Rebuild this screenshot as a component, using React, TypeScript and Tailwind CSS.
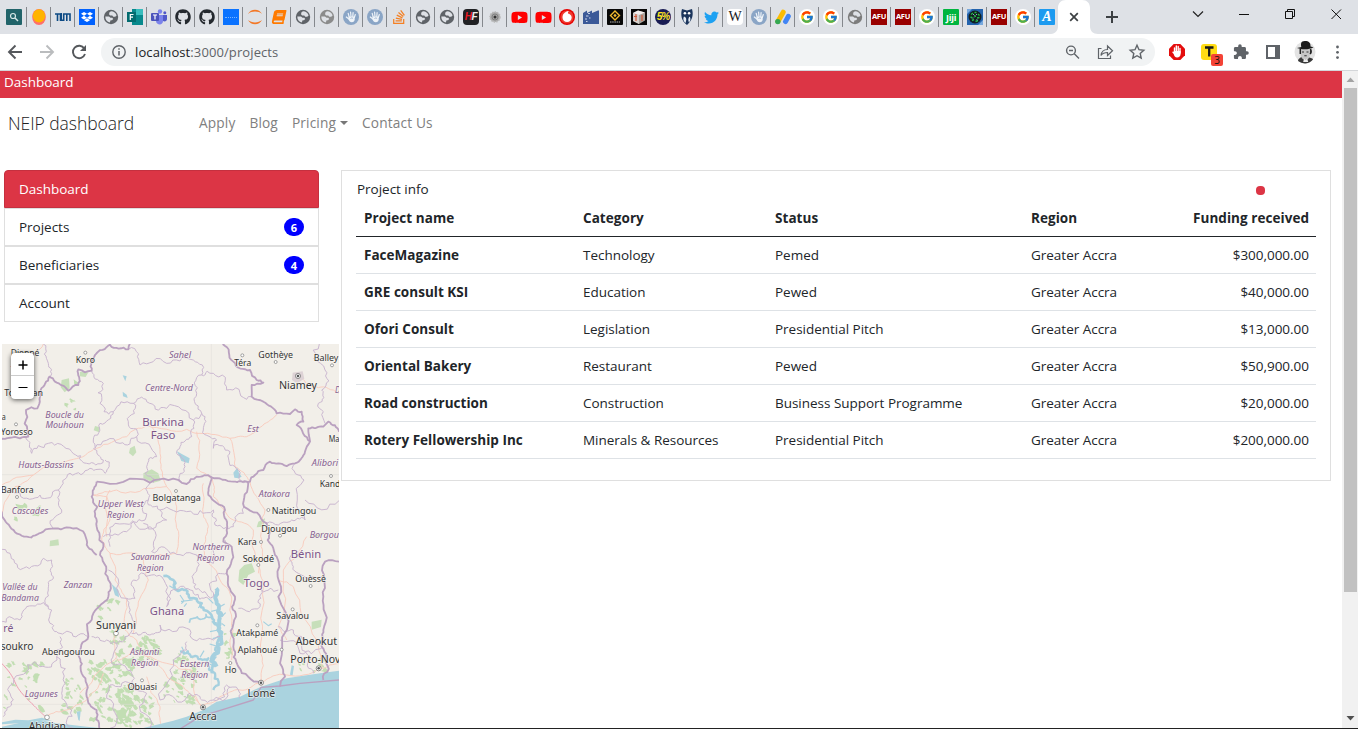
import React from "react";
import { FaBook, FaDropbox, FaGithub, FaStackOverflow, FaTwitter, FaYoutube } from "react-icons/fa";
import { FcGoogle } from "react-icons/fc";
import { MdExtension } from "react-icons/md";

/* ---------- tab icons ---------- */

function Globe({ color = "#5f6368" }: { color?: string }) {
  return (
    <svg width="16" height="16" viewBox="0 0 16 16">
      <circle cx="8" cy="8" r="7.2" fill={color} />
      <path d="M2.300 7.500H6l1.500 1.300h1.800l.9 1.200-1.200 1.300H7.600l-.8 2.300C4 13 2.200 10.500 2.300 7.500ZM6.500 3.300 8 2.200c2.800 0 5 1.800 5.600 4.300l-1.400 1.200h-2l-.9-1.200H7.200L6 5.300Z" fill="#dee1e6" />
    </svg>
  );
}

function Hand() {
  return (
    <svg width="16" height="16" viewBox="0 0 16 16">
      <circle cx="8" cy="8" r="8" fill="#8aa5c6" />
      <path d="M6.200 8 5.200 4.300M8 7.500 7.600 3.200M9.800 7.500l.3-4M11.300 8.500l1-3M5.600 9.800 3.300 8" stroke="#eef3f8" strokeWidth="1.200" strokeLinecap="round" />
      <path d="M5.500 7.500h6.200v2.800c0 2-1.300 3-2.900 3-1.700 0-2.700-1.200-3.300-3Z" fill="#eef3f8" />
      <path d="M7.500 9.500c.8-.7 2-.6 2.500.2" fill="none" stroke="#8aa5c6" strokeWidth=".8" />
    </svg>
  );
}

function Google() {
  return (
    <span className="flex size-4 items-center justify-center rounded-full bg-white">
      <FcGoogle size={14} />
    </span>
  );
}

function Afu() {
  return (
    <span className="flex size-4 items-center justify-center bg-[#990000] font-['Noto_Sans',sans-serif] text-[7.5px] leading-none font-bold tracking-[-0.3px] text-white">
      AFU
    </span>
  );
}

function Youtube() {
  return (
    <span className="flex size-4 items-center justify-center">
      <FaYoutube size={17} color="#ff0000" className="shrink-0" />
    </span>
  );
}

const tabIcons: React.ReactNode[] = [
  <svg width="16" height="16" viewBox="0 0 16 16" className="-ml-0.5">
    <rect width="16" height="16" rx="1" fill="#21646a" />
    <circle cx="7" cy="7" r="2.500" fill="none" stroke="#d7e8e8" strokeWidth="1.200" />
    <path d="m9 9 3 3" stroke="#d7e8e8" strokeWidth="1.400" />
  </svg>,
  <svg width="16" height="16" viewBox="0 0 16 16">
    <ellipse cx="8" cy="8" rx="6.800" ry="8" fill="#ff6f6a" />
    <ellipse cx="8" cy="6.800" rx="6.200" ry="6.600" fill="#ffb400" />
  </svg>,
  <svg width="16" height="16" viewBox="0 0 16 16">
    <path d="M0 5h5.500v7M2.500 5v7M6.200 4v7.200h2.500V5H15v7M11.800 5v7" fill="none" stroke="#0d4a84" strokeWidth="1.600" />
  </svg>,
  <span className="flex size-4 items-center justify-center bg-[#0061fe]"><FaDropbox size={12} color="white" /></span>,
  <Globe />,
  <svg width="16" height="16" viewBox="0 0 16 16">
    <path d="M5 0h11v16H5z" fill="#07898d" />
    <path d="M9 0h7v6H9z" fill="#38bcbd" />
    <path d="M0 3h9v10H0z" fill="#036c70" />
    <path d="M3.300 11V5.500h3.200M3.300 8.100h2.700" fill="none" stroke="#fff" strokeWidth="1.200" />
  </svg>,
  <svg width="16" height="16" viewBox="0 0 16 16">
    <circle cx="9" cy="2.500" r="2.200" fill="#7b83eb" /><circle cx="13.800" cy="3.700" r="1.500" fill="#5059c9" />
    <path d="M5 6h7v6c0 5-7 4-7 0z" fill="#7b83eb" /><path d="M12 6h4v4c0 2-2 3-4 2z" fill="#5059c9" />
    <rect y="4" width="8" height="8" rx="1" fill="#4b53bc" />
    <path d="M2 6h4M4 6v4.500" stroke="#fff" strokeWidth="1.200" />
  </svg>,
  <FaGithub size={16} color="#24292f" />,
  <FaGithub size={16} color="#24292f" />,
  <span className="flex size-4 items-center justify-center bg-[#0a72ff]"><span className="w-3 border-t border-dotted border-[#7ab4ff]" /></span>,
  <svg width="16" height="16" viewBox="0 0 16 16">
    <path d="M1 5C3.500-.7 12.500-.7 15 5 11.500 1.800 4.500 1.800 1 5ZM1 11c2.500 5.700 11.500 5.700 14 0-3.500 3.200-10.500 3.200-14 0Z" fill="#f37726" />
  </svg>,
  <FaBook size={14} color="#ff7a00" className="-skew-x-12" />,
  <Globe />,
  <Globe color="#8b8b8b" />,
  <Hand />,
  <Hand />,
  <FaStackOverflow size={16} color="#f48024" />,
  <Globe />,
  <Globe />,
  <span className="flex size-4 items-center justify-center rounded-sm bg-[#202124] font-['Liberation_Sans',sans-serif] text-[10px] leading-none font-bold tracking-[-0.5px] text-[#ed1c24] italic">
    H<span className="text-[#eeeeee]">F</span>
  </span>,
  <svg width="16" height="16" viewBox="0 0 16 16">
    <circle cx="8" cy="8" r="5" fill="#a9a9a9" stroke="#b8b8b8" strokeWidth="1.500" strokeDasharray="1.500 1" />
    <circle cx="8" cy="8" r="3" fill="none" stroke="#777" strokeWidth=".8" /><circle cx="8" cy="8" r="1.500" fill="#333" />
  </svg>,
  <Youtube />,
  <Youtube />,
  <svg width="16" height="16" viewBox="0 0 16 16">
    <circle cx="8" cy="8" r="8" fill="#e60000" /><circle cx="8" cy="8" r="6.600" fill="#ef3b30" />
    <path d="M9.500 2C6 2.600 3.500 5 3.500 8.500A4.600 4.600 0 0 0 12.700 8.500C12.700 6.500 11 5 9 4.500 8.800 3.500 9 2.600 10 2.100Z" fill="#fff" />
  </svg>,
  <svg width="16" height="16" viewBox="0 0 16 16">
    <path d="M0 4 4 1.500V4l5-2.500V4l6-2.500h1V15H0Z" fill="#3b5998" />
    <path d="M5 4.500h2M3 7h2.500M2 10h2M6 9h1.500M3 12.500h1.500" stroke="#c7d2e8" strokeWidth="1.100" />
  </svg>,
  <svg width="16" height="16" viewBox="0 0 16 16">
    <rect width="16" height="16" rx="1" fill="#080808" />
    <path d="m8 2 4.500 4.500L8 11 3.500 6.500Z" fill="none" stroke="#f3ba2f" strokeWidth="1.400" /><path d="m8 4.800 1.700 1.700L8 8.200 6.300 6.500Z" fill="#f3ba2f" />
    <path d="M3 13h10" stroke="#bbb" strokeWidth="1" strokeDasharray="1.500 .7" />
  </svg>,
  <svg width="16" height="16" viewBox="0 0 16 16">
    <rect width="16" height="16" fill="#080808" />
    <path d="m2 4 5-2.500 7 2v8L8 15l-6-3Z" fill="#a9a29c" /><path d="m2 4 6 2v9l-6-3Z" fill="#d5d0cc" /><path d="M3 7.500h3M11 6v6M5 5v7" stroke="#d25b3a" strokeWidth="1.200" /><path d="m2 4 5-2.500 7 2L8 6Z" fill="#f2eeee" />
  </svg>,
  <span className="flex size-4 items-center justify-center rounded-full bg-[#191c54] font-['Liberation_Sans',sans-serif] text-[10px] leading-none font-bold tracking-[-1px] text-[#ffe51f] italic">5%</span>,
  <svg width="16" height="16" viewBox="0 0 16 16">
    <path d="M3 0 8 1.500 13 0c1.500 5 1 11-5 16C2 12 1.500 5 3 0Z" fill="#1b355c" />
    <circle cx="5.900" cy="4.200" r="1.300" fill="#fff" /><circle cx="10.100" cy="4.200" r="1.300" fill="#fff" />
    <path d="M5 7.500c3 1 2.500 4 1.500 6.500C4 12 4 9 5 7.500ZM10.500 7.500c1.800 2 .5 5-.5 6-1-2-1-4 .5-6Z" fill="#e6edf5" />
  </svg>,
  <FaTwitter size={15} color="#1da1f2" />,
  <span className="flex size-4 items-center justify-center rounded-sm bg-white font-['Liberation_Serif',serif] text-[14px] leading-none font-normal text-[#202122]">W</span>,
  <Hand />,
  <svg width="16" height="16" viewBox="0 0 16 16">
    <path d="m8.200 3.200-5.300 9.200" stroke="#fbbc04" strokeWidth="5" strokeLinecap="round" />
    <path d="m13.300 7.300-2.800 5.300" stroke="#4285f4" strokeWidth="5" strokeLinecap="round" /><circle cx="2.800" cy="12.600" r="2.700" fill="#34a853" />
  </svg>,
  <Google />,
  <Google />,
  <Globe color="#7c7c7c" />,
  <Afu />,
  <Afu />,
  <Google />,
  <span className="flex size-4 items-center justify-center rounded-[1px] bg-[#00b53f] font-['Noto_Sans',sans-serif] text-[9px] leading-none font-bold tracking-[-0.2px] text-white">Jiji</span>,
  <svg width="16" height="16" viewBox="0 0 16 16">
    <rect width="16" height="16" fill="#2463ad" /><path d="M0 0h5L0 5ZM16 11v5h-5Z" fill="#77a8dd" />
    <circle cx="8" cy="8" r="6.500" fill="#101f20" />
    <path d="M4 5.500 6 4M7.500 3.500h2M11 5l1.500 1.500M3.500 8l2 1M7 6.500l2 1M10 9l2.500-.5M5 11.500l2-1M8.500 12.500l2.500-1" fill="none" stroke="#27b84b" strokeWidth="1.400" />
    <path d="m6 6 1-1M9 5l1 1M6 9.500l1-1M9.500 10.500l1 .5" stroke="#8f9bd0" />
  </svg>,
  <Afu />,
  <Google />,
  <span className="flex size-4 items-center justify-center rounded-[1px] bg-[#1d9bf0] font-['Liberation_Serif',serif] text-[14px] leading-none font-bold text-white italic">A</span>,
];

function TabStrip() {
  return (
    <div className="flex h-[34px] shrink-0 bg-[#dee1e6]">
      <div className="flex w-[1055px] shrink-0 pl-[3px]">
        {tabIcons.map((icon, i) => (
          <div key={i} className="flex h-[34px] w-6 shrink-0 items-center pl-1">
            <span className="flex size-4 shrink-0 items-center justify-center">{icon}</span>
            {i < 43 && <span className="ml-[3px] h-5 w-px shrink-0 bg-[#85888d]" />}
          </div>
        ))}
      </div>
      <svg width="50" height="34" viewBox="0 0 50 34" className="-ml-1 shrink-0">
        <path d="M-1 34c5 0 8-3 8-8V8c0-5 3-8 8-8h16c5 0 8 3 8 8v18c0 5 3 8 8 8Z" fill="#fff" />
        <path d="m19.200 13.200 7.600 7.600m0-7.600-7.600 7.600" stroke="#3c4043" strokeWidth="1.700" />
      </svg>
      <svg width="257" height="34" viewBox="1101 0 257 34" className="shrink-0" fill="none">
        <path d="M1106 17h12M1112 11v12" stroke="#3c4043" strokeWidth="2" />
        <path d="m1193 11.500 5 5 5-5" stroke="#222" strokeWidth="1.200" />
        <path d="M1239 14.500h10M1285.500 11.500h7v7h-7ZM1287.500 11.500v-2h7v7h-2M1331.500 9.500l9.500 9.500m0-9.500-9.500 9.500" stroke="#111" />
      </svg>
    </div>
  );
}

function Toolbar() {
  return (
    <div className="flex h-[37px] shrink-0 items-start border-b border-[#d4d6d9] bg-white">
      <svg width="101" height="36" viewBox="0 34 101 36" fill="none" strokeWidth="1.900">
        <path d="M22 52H9m6.500-6.500L9 52l6.500 6.500" stroke="#55585c" />
        <path d="M40 52h13m-6.500-6.500L53 52l-6.500 6.500" stroke="#babcbe" />
        <path d="M84.300 48.500A6.200 6.200 0 1 0 85 54" stroke="#55585c" />
        <path d="M86 45v6h-6Z" fill="#55585c" />
      </svg>
      <div className="mt-1 flex h-7 w-[1054px] shrink-0 items-center rounded-full bg-[#f1f3f4] pl-[11px]">
        <svg width="14" height="14" viewBox="0 0 14 14">
          <circle cx="7" cy="7" r="6.200" fill="none" stroke="#5f6368" strokeWidth="1.400" />
          <path d="M7 6v4.500M7 3.300v1.500" stroke="#5f6368" strokeWidth="1.500" />
        </svg>
        <span className="ml-[9px] font-['Open_Sans','Noto_Sans',sans-serif] text-[13px] leading-7 tracking-[0.1px] whitespace-nowrap text-[#202124]">
          localhost<span className="text-[#5f6368]">:3000/projects</span>
        </span>
        <svg width="90" height="28" viewBox="1062 38 90 28" className="mr-[3px] ml-auto" fill="none" stroke="#5f6368" strokeWidth="1.400">
          <circle cx="1071" cy="50.500" r="4.400" /><path d="m1074.300 53.800 4.700 4.700M1069 50.500h4" />
          <path d="M1101.500 48.500h-3v10h12v-3M1101 55.500c.5-4 3-6 6.500-6V46l5 4.800-5 4.700v-3c-3 0-5 .8-6.500 3Z" strokeWidth="1.200" />
          <path d="m1137 45.300 2 4.400 4.800.5-3.600 3.200 1 4.800-4.200-2.500-4.200 2.500 1-4.800-3.600-3.200 4.800-.5Z" />
        </svg>
      </div>
      <svg width="203" height="36" viewBox="1155 34 203 36">
        <path d="m1173.700 44 6.600 0 4.700 4.700v6.600l-4.700 4.700h-6.600l-4.700-4.700v-6.600Z" fill="#e40d0d" />
        <path d="M1174.500 52v-4M1176.300 51v-5M1178.200 51v-4.500M1180 53v-4.500M1174.300 53.500l-1.300-1.300" stroke="#fff" strokeWidth="1.400" strokeLinecap="round" />
        <path d="M1173.800 51h6.800v3c0 2-1.500 3.500-3.500 3.500s-3-2-3.300-3Z" fill="#fff" />
        <rect x="1201" y="44" width="16" height="16" rx="3" fill="#ffdc14" />
        <path d="M1205 47.500h8.500M1209.200 47v9.500" stroke="#171717" strokeWidth="2.300" />
        <rect x="1211" y="54" width="12" height="12" rx="2" fill="#f44336" />
        <text x="1217" y="63.800" textAnchor="middle" fontFamily="Open Sans, sans-serif" fontSize="10" fill="#111">3</text>
        <path d="M1267 46h12v12h-12Z" fill="none" stroke="#5f6368" strokeWidth="2" /><path d="M1275 46h5v12h-5Z" fill="#5f6368" />
        <circle cx="1305" cy="52" r="10.500" fill="#e3e3e3" />
        <path d="M1298 61c0-2 2-3.500 4-4h6c3 1 5 1.500 5 2.500a10.500 10.500 0 0 1-15 1.500Z" fill="#3a3a3a" />
        <path d="M1300.500 49h9.500v5c0 3-2 6-4.500 6s-5-3-5-6Z" fill="#c6c6c6" />
        <path d="M1301.300 47c-.5-3-.7-6 3.500-6s6 2 5.700 5.500l3 .7c-4 2.500-11 2.800-16.500.8Z" fill="#1b1b1b" />
        <path d="M1300.300 49v5M1310.500 49c1 2 .6 4-.5 5" stroke="#222" strokeWidth="1.500" />
        <path d="M1302 52h2M1306.500 52h2M1304.300 55.800h2.400" stroke="#333" strokeWidth="1.100" />
        <path d="m1304 58.500 1.500 1.500 1.700-1.500 1 3.500h-5Z" fill="#eee" />
        <circle cx="1337.500" cy="47" r="1.400" fill="#5f6368" /><circle cx="1337.500" cy="52.300" r="1.400" fill="#5f6368" /><circle cx="1337.500" cy="57.600" r="1.400" fill="#5f6368" />
        <MdExtension x="1232.500" y="43.500" size={17} color="#5f6368" />
      </svg>
    </div>
  );
}

/* ---------- map ---------- */

type Pt = [number, number];

function seeded(seed: number) {
  let s = seed;
  return () => {
    s = (s * 16807) % 2147483647;
    return s / 2147483647;
  };
}

/* Subdivides a coarse polyline so that it gets the irregular run of a real border. */
function wiggle(points: Pt[], amount: number, seed: number): string {
  const rnd = seeded(seed * 7919 + 13);
  let pts = points;
  for (let level = 0; level < 3; level++) {
    const next: Pt[] = [pts[0]];
    for (let i = 1; i < pts.length; i++) {
      const [ax, ay] = pts[i - 1];
      const [bx, by] = pts[i];
      const len = Math.hypot(bx - ax, by - ay);
      if (len > 11) {
        const k = (rnd() - 0.5) * amount;
        next.push([(ax + bx) / 2 - (by - ay) * k, (ay + by) / 2 + (bx - ax) * k]);
      }
      next.push(pts[i]);
    }
    pts = next;
  }
  return "M" + pts.map(([x, y]) => x.toFixed(1) + " " + y.toFixed(1)).join("L");
}

function parse(s: string): Pt[] {
  return s.split(" ").map((p) => p.split(",").map(Number) as Pt);
}

const borders = [
  "0,300 60,295 85,290 78,210 112,205 122,150 148,110 165,125 205,152 235,135 235,88 275,92 285,45 330,14 385,28 390,10",
  "668,12 700,65 750,90 770,120 790,128 755,135 755,170 790,185 830,220 870,222 885,208 905,215 910,245 890,255 930,305 915,335 885,370 835,370 810,365 790,390 765,405 750,425 740,427",
  "930,305 925,265 970,260 985,245 1017,275",
  "290,425 450,428 560,432 590,410 635,412 700,425 745,428",
  "290,425 275,470 292,500 290,560 298,600 310,610 300,645 325,720 325,770 280,820 265,890 235,945 245,1000 260,1070 290,1110 298,1165",
  "635,412 625,465 675,510 680,570 670,605 695,620 680,700 705,770 708,830 700,920 715,980 783,1028",
  "745,428 732,500 800,550 803,600 830,650 835,770 840,970 855,1010 840,1040",
  "5,515 30,560 80,590 130,575 200,562 240,570 260,600 290,645",
  "1017,665 975,665 970,770 970,870 965,920 980,950 970,1020",
];

const regions = [
  "385,28 420,75 500,70 580,60 605,105 590,160 605,220 580,240 500,205 440,185 400,190 340,215 300,190 310,130 275,92",
  "605,105 640,100 680,150 740,178 755,170",
  "605,220 610,270 650,300 640,325 690,335 705,380 740,425",
  "340,215 300,250 280,300 285,325 360,310 410,290 385,245 400,190",
  "410,290 470,350 440,380 435,400 460,428",
  "580,240 575,290 540,320 530,340 555,380 545,425",
  "78,290 95,340 145,310 215,335 260,370 310,360 280,325",
  "0,450 60,460 120,465 175,450 210,400 270,385 315,400 315,360",
  "175,450 185,510 150,550 160,565",
  "130,12 145,70 148,110",
  "450,428 445,480 435,540 380,575 310,590",
  "445,480 480,510 560,515 640,510 645,555 700,560 730,520 732,500",
  "480,510 500,540 430,550",
  "885,370 912,420 915,540 870,545 835,555 800,550",
  "915,480 1017,482",
  "958,12 975,90 965,150 955,190 970,215 975,250",
  "0,635 30,640 70,685 130,655 155,660 160,710 145,750 155,810 150,850 180,880 235,885 265,890",
  "0,850 60,840 80,800 145,800",
  "180,890 170,950 120,980 60,1005 40,1080 10,1130",
  "170,950 195,1030 185,1060 215,1110 220,1165",
  "330,620 345,550 450,560 455,635 510,640 590,645 640,670 675,600",
  "590,645 580,720 615,755 640,770 655,700 680,700",
  "325,690 380,775 405,775 400,720 455,705 485,710 500,800 530,750 580,760 625,775",
  "380,775 395,830 375,890 350,910 320,900 275,890",
  "395,880 450,885 480,855 560,865 575,895 640,900 660,890",
  "560,905 560,930 520,960 480,1080 555,1080 570,1060 605,1080 640,1080 690,1040",
  "350,910 345,975 395,1000 395,1030 330,1035 320,1075 330,1165",
  "395,1030 440,1060 450,1165",
  "715,805 780,800 785,750 835,750",
  "835,860 880,870 905,920 965,925",
  "885,630 880,680 895,700 970,710",
  "640,1080 680,1035 715,1050 720,1075",
  "840,900 900,940 930,950 940,1000",
];

const roads = [
  "6,435 100,405 220,358 290,325 380,290 440,255 560,268 600,280 690,295 740,290 780,262 830,225",
  "455,260 480,340 495,430 500,440 460,445 350,450 280,465",
  "590,275 590,385 635,415 640,470 700,540 760,570 775,700",
  "690,295 705,380 750,425 795,510 785,600 775,675 790,740 780,930 783,1025",
  "500,440 530,500 535,600 530,640 430,655 410,640 330,640",
  "280,465 320,470 330,540 305,600 330,640 345,720 380,780 375,870 410,900 470,970 550,1040 605,1100",
  "610,430 610,500 625,560 610,620 660,720 695,780 690,900 695,960",
  "430,655 445,720 410,810 400,880",
  "350,960 400,940 500,970 575,990 605,1100",
  "330,450 320,590", "345,880 350,950 290,1000 240,1060",
  "605,1100 660,1070 720,1050 783,1026 860,1005 960,985",
  "440,1010 480,1100 490,1165", "130,12 90,70 30,80",
  "900,110 940,140 1000,150 1017,160", "835,720 880,740 950,900 965,985 1017,970",
  "140,1130 200,1110 260,1080 310,1000", "920,590 850,690 835,860 860,900",
  "6,520 45,440 100,405",
];

const greenZones: [number, number, number, number, number][] = [
  [290, 890, 130, 90, 20], [270, 960, 130, 190, 80], [350, 1070, 110, 90, 60], [190, 1010, 60, 110, 20],
  [410, 890, 70, 80, 28], [10, 970, 120, 150, 20], [520, 940, 70, 90, 22], [490, 1030, 90, 60, 16],
  [40, 490, 80, 60, 6], [675, 880, 30, 90, 9], [290, 780, 70, 100, 10], [880, 960, 100, 40, 8], [190, 120, 60, 100, 5],
];

function forest() {
  const rnd = seeded(4242);
  const out: string[] = [];
  for (const [x, y, w, h, n] of greenZones)
    for (let i = 0; i < n; i++) {
      const cx = x + rnd() * w;
      const cy = y + rnd() * h;
      const r = 4 + rnd() * 8;
      const lean = (rnd() - 0.3) * 1.2;
      const pts: string[] = [];
      for (let a = 0; a < 9; a++) {
        const q = r * (0.35 + rnd());
        const dx = Math.cos(a * 0.698) * q;
        const dy = Math.sin(a * 0.698) * q * 0.8;
        pts.push((cx + dx).toFixed(1) + " " + (cy + dy + dx * lean).toFixed(1));
      }
      out.push("M" + pts.join("L") + "Z");
    }
  return out.join("");
}

type Label = [string, number, number, number, "town" | "region" | "country"];
const labels: Label[] = [
  ["Dienné", 75, 49, 86, "town"], ["Koro", 256, 68, 58, "town"], ["Téra", 728, 79, 51, "town"],
  ["Gothèye", 827, 55, 104, "town"], ["Balley", 978, 64, 74, "town"], ["Niamey", 894, 148, 114, "town"],
  ["Tominian", 71, 167, 116, "town"], ["Yorosso", 50, 285, 96, "town"], ["Banfora", 52, 460, 98, "town"],
  ["Bolgatanga", 530, 484, 145, "town"], ["Natitingou", 882, 523, 134, "town"], ["Djougou", 838, 576, 108, "town"],
  ["Kand", 990, 441, 62, "town"], ["Ma", 1002, 306, 32, "town"], ["a", 11, 239, 12, "town"],
  ["Sahel", 540, 53, 66, "region"], ["Centre-Nord", 507, 154, 144, "region"], ["Boucle du", 194, 233, 116, "region"],
  ["Mouhoun", 194, 265, 115, "region"], ["Est", 759, 276, 34, "region"], ["Hauts-Bassins", 138, 385, 166, "region"],
  ["Cascades", 90, 521, 110, "region"], ["Upper West", 362, 502, 137, "region"], ["Region", 362, 534, 82, "region"],
  ["Alibori", 975, 377, 79, "region"], ["Atakora", 823, 470, 93, "region"], ["D", 1013, 160, 16, "region"],
  ["Burkina", 489, 257, 125, "country"], ["Faso", 489, 296, 74, "country"],
  ["Kara", 742, 616, 57, "town"], ["Sokodé", 775, 666, 94, "town"], ["Ouèssè", 932, 726, 92, "town"],
  ["Savalou", 878, 838, 98, "town"], ["Atakpamé", 772, 888, 126, "town"], ["Aplahoué", 773, 938, 119, "town"],
  ["Abeokut", 949, 914, 124, "town"], ["Porto-Nov", 946, 968, 150, "town"], ["Ho", 692, 1000, 35, "town"],
  ["Lomé", 784, 1070, 83, "town"], ["Accra", 609, 1140, 82, "town"], ["Obuasi", 427, 1051, 88, "town"],
  ["Sunyani", 348, 868, 120, "town"], ["Abengourou", 205, 945, 158, "town"], ["soukro", 51, 929, 98, "town"],
  ["Abidjan", 142, 1170, 112, "town"],
  ["Northern", 633, 629, 111, "region"], ["Region", 632, 662, 82, "region"], ["Savannah", 451, 661, 118, "region"],
  ["Region", 451, 693, 80, "region"], ["Zanzan", 234, 743, 86, "region"], ["Vallée du", 60, 751, 106, "region"],
  ["Bandama", 60, 783, 113, "region"], ["Ashanti", 434, 946, 88, "region"], ["Region", 434, 978, 82, "region"],
  ["Eastern", 584, 981, 88, "region"], ["Region", 584, 1013, 80, "region"], ["Lagunes", 124, 1071, 99, "region"],
  ["Borgou", 973, 595, 88, "region"], ["Bénin", 918, 654, 91, "country"], ["Togo", 770, 741, 77, "country"],
  ["Ghana", 501, 825, 103, "country"], ["ré", 25, 875, 30, "country"],
];
const bigTowns = ["Niamey", "Lomé", "Accra", "Sunyani", "soukro", "Abeokut", "Porto-Nov", "Abidjan"];

function GhanaMap() {
  return (
    <svg width="337" height="384" viewBox="6 12 1011 1152" className="block overflow-hidden">
      <rect x="6" y="12" width="1011" height="1152" fill="#f2efe9" />
      <path d={forest()} fill="#c2deb3" />
      <path d="M430 400l25-12 20 12 7 22-22 6-30-14Z M150 602l25-4 2 18-28 3Z M185 120l22-5 2 30-15 12-12-15Z M285 258l15 4-2 15-17-6Z M390 325l14-8 5 20-10 12-12-10Z M718 690l15-15 22-5 10 25-20 10-15 30-15-12Z M935 845l30-6-2 22-28 8Z M775 545l20-10-5 25-20 2Z M240 95l25 2-8 14-18-2Z M930 590l45-15-15 15Z" fill="#c7dfba" />
      <g stroke="#dfdcd8" strokeWidth="1.500"><path d="M634 12v1152M6 404h1011M6 1093h700" /></g>
      <g fill="none" stroke="#f9cbbd" strokeWidth="2.800">
        {roads.map((r, i) => <path key={i} d={wiggle(parse(r), 0.22, i + 50)} />)}
        <path d="M0 965c60 60 30 60 80 110s40 40 60 58" stroke="#ee9cb0" strokeWidth="3" />
      </g>
      <path d="M6 1160 60 1148 110 1138 160 1148 260 1160 300 1164H6ZM430 1164 520 1142 560 1130 610 1110 650 1085 720 1070 783 1040 860 1015 960 1000 1017 992V1164Z" fill="#aad3df" />
      <path d="m6 1147 40-8 40 2 40-8 30 10-50-2-40 8-60 4ZM870 1004l5-28 7 2-4 28ZM235 1140l-5-25 12-2-3 30ZM335 732l20 18 2 22-12-6ZM700 398l12-15 5 15 8 12-10 5-12-2ZM530 333l14 8 25 14-3 15-22-7-5-12ZM368 106l12 3-4 15ZM368 155l12 9 3 10-14-5Z" fill="#aad3df" />
      <g fill="none" stroke="#a5d0df" strokeLinejoin="round">
        <path d={wiggle(parse("490,708 520,720 540,750 570,775 605,790 630,820 655,860 655,900 650,940 635,1000"), 0.6, 5)} strokeWidth="8" />
        <path d={wiggle(parse("648,745 650,790 665,825 655,870 665,910 650,980"), 0.7, 9)} strokeWidth="12" />
        <path d={wiggle(parse("540,935 580,950 625,955 645,1000 640,1050"), 0.7, 3)} strokeWidth="7" />
        <path d={wiggle(parse("568,848 600,838 638,835"), 0.7, 2)} strokeWidth="5" />
        <path d="m520 720 6 24M540 765l12 18-8 8M578 780l-35 4M605 790l-10 14M655 850l-20-5M665 830l12-12M555 940l-10-20M600 952l12-20M655 870l-25 5M790 845l15 12 10-6M640 790l-15-15M660 800l14-8M650 810l-16 4M665 850l10 8M660 890l-22 6M655 920l-26-8M650 950l-22 14M645 980l-16-8M520 745l-12-8M560 790l-8 10" strokeWidth="3.500" />
      </g>
      <g fill="none" stroke="#c9b5cf" strokeWidth="2.900" strokeLinejoin="round">
        {regions.map((r, i) => <path key={i} d={wiggle(parse(r), 0.65, i + 1)} />)}
      </g>
      <g fill="none" stroke="#baa1c0" strokeWidth="5.500" strokeLinejoin="round">
        {borders.map((r, i) => <path key={i} d={wiggle(parse(r), 0.35, i + 21)} />)}
        <path d="M540 1167 600 1130 680 1105 760 1080 783 1042 840 1038 900 1030 1017 1020" strokeWidth="4" />
      </g>
      <path d="M878 98l30-4 5 22-22 14-15-10Z" fill="#ddd2d5" />
      {townDots.map(([x, y]) => <circle key={x + "-" + y} cx={x} cy={y} r="4.500" fill="#fff" stroke="#777" strokeWidth="2" />)}
      <g fill="#fff" stroke="#777" strokeWidth="2"><circle cx="348" cy="880" r="7" /><circle cx="141" cy="1132" r="7" /></g>
      {[[894, 108], [783, 1028], [609, 1102], [956, 985]].map(([x, y]) => (
        <g key={x}><circle cx={x} cy={y} r="7.500" fill="#fff" stroke="#555" strokeWidth="2" /><circle cx={x} cy={y} r="3.800" fill="#555" /></g>
      ))}
      {labels.map(([text, x, y, width, kind], i) => (
        <text
          key={i}
          x={x}
          y={y}
          textAnchor="middle"
          textLength={width}
          lengthAdjust="spacingAndGlyphs"
          fontFamily="Noto Sans, sans-serif"
          fontSize={kind === "country" ? 34 : kind === "region" ? 29 : bigTowns.includes(text) ? 34 : 29}
          fontStyle={kind === "region" ? "italic" : "normal"}
          fill={kind === "town" ? "#333" : kind === "region" ? "#86608f" : "#7b5589"}
          stroke="#f7f5f1"
          strokeWidth="4"
          strokeOpacity=".75"
          paintOrder="stroke"
        >
          {text}
        </text>
      ))}
    </svg>
  );
}

const townDots: Pt[] = [
  [256, 38], [727, 46], [827, 66], [996, 76], [993, 408], [48, 253], [51, 471], [528, 453], [805, 510], [840, 587],
  [783, 606], [775, 675], [932, 738], [878, 808], [772, 856], [845, 929], [691, 969], [426, 1021],
];

/* ---------- page ---------- */

const projects = [
  ["FaceMagazine", "Technology", "Pemed", "$300,000.00"],
  ["GRE consult KSI", "Education", "Pewed", "$40,000.00"],
  ["Ofori Consult", "Legislation", "Presidential Pitch", "$13,000.00"],
  ["Oriental Bakery", "Restaurant", "Pewed", "$50,900.00"],
  ["Road construction", "Construction", "Business Support Programme", "$20,000.00"],
  ["Rotery Fellowership Inc", "Minerals & Resources", "Presidential Pitch", "$200,000.00"],
];

function Badge({ count }: { count: number }) {
  return <span className="flex h-[18px] w-5 items-center justify-center rounded-full bg-[#0000ff] text-[11px] leading-none font-bold text-white">{count}</span>;
}

function Sidebar() {
  return (
    <ul className="ml-1 flex w-[315px] flex-col">
      <li className="flex h-[38px] items-center rounded-t border border-[#c5303f] bg-[#dc3545] px-[14px] text-white">Dashboard</li>
      <li className="flex h-[38px] items-center justify-between border border-[#dfdfdf] px-[14px]">Projects<Badge count={6} /></li>
      <li className="flex h-[38px] items-center justify-between border border-[#dfdfdf] px-[14px]">Beneficiaries<Badge count={4} /></li>
      <li className="flex h-[38px] items-center border border-[#dfdfdf] px-[14px]">Account</li>
    </ul>
  );
}

function ProjectCard() {
  return (
    <section className="mt-[72px] ml-0.5 h-[311px] w-[990px] border border-[#dfdfdf] px-[14px] pt-2">
      <div className="flex h-[21px] items-center justify-between pr-[51px] pl-px">
        <span>Project info</span>
        <span className="mt-0.5 size-[9px] rounded-[4px] bg-[#dc3545]" />
      </div>
      <table className="-mt-px w-[960px] table-fixed border-collapse text-left">
        <colgroup>
          <col className="w-[219px]" /><col className="w-[192px]" /><col className="w-[256px]" /><col className="w-[135px]" /><col />
        </colgroup>
        <thead>
          <tr className="h-[37px] border-b border-[#212529] font-bold tracking-[0.05px]">
            <th className="px-2 pt-0.5">Project name</th><th className="px-2 pt-0.5">Category</th><th className="px-2 pt-0.5">Status</th><th className="px-2 pt-0.5">Region</th><th className="pt-0.5 pr-[7px] text-right">Funding received</th>
          </tr>
        </thead>
        <tbody>
          {projects.map(([name, category, status, funding]) => (
            <tr key={name} className="h-[37px] border-b border-[#dee2e6]">
              <th className="px-2 pt-0.5 tracking-[0.03px] whitespace-nowrap">{name}</th><td className="px-2 pt-0.5 whitespace-nowrap">{category}</td><td className="px-2 pt-0.5 whitespace-nowrap">{status}</td><td className="px-2 pt-0.5">Greater Accra</td><td className="pt-0.5 pr-[7px] text-right">{funding}</td>
            </tr>
          ))}
        </tbody>
      </table>
    </section>
  );
}

export default function App() {
  return (
    <div className="flex h-[729px] w-[1358px] flex-col overflow-hidden bg-white">
      <TabStrip />
      <Toolbar />
      <div className="flex h-[657px] shrink-0">
        <main className="w-[1342px] shrink-0 font-['Open_Sans','Noto_Sans',sans-serif] text-[13.5px] leading-[21px] tracking-[-0.02px] text-[#212529]">
          <header className="h-[27px] bg-[#dc3545] pl-1 leading-[23px] text-white">Dashboard</header>
          <div className="flex">
            <div className="flex w-[339px] shrink-0 flex-col">
              <nav className="flex h-[72px] items-start pt-[11px] pl-2">
                <span className="w-[191px] shrink-0 text-[17.5px] leading-[28px] font-light tracking-[-0.05px] text-[#222]">NEIP dashboard</span>
                <div className="flex shrink-0 gap-[14px] text-[13.7px] leading-[28px] tracking-[0.14px] whitespace-nowrap text-[#808080]">
                  <span>Apply</span><span>Blog</span>
                  <span className="flex items-center">Pricing<span className="ml-1 border-x-[4.500px] border-t-[4.500px] border-x-transparent border-t-[#777]" /></span>
                  <span>Contact Us</span>
                </div>
              </nav>
              <Sidebar />
              <div className="relative mt-[22px] ml-0.5 h-[384px] w-[337px] overflow-hidden">
                <GhanaMap />
                <div className="absolute top-[9px] left-[9px] flex w-[23px] flex-col overflow-hidden rounded bg-white shadow-[0_1px_5px_rgba(0,0,0,0.65)]">
                  <button className="flex h-[23px] items-center justify-center border-b border-[#ccc] pt-px pl-px"><svg width="10" height="10"><path d="M.5 5h9M5 .5v9" stroke="#000" strokeWidth="1.500" /></svg></button>
                  <button className="flex h-[23px] items-center justify-center pl-px"><svg width="10" height="9"><path d="M.5 4.500h9" stroke="#000" strokeWidth="1.200" /></svg></button>
                </div>
              </div>
            </div>
            <ProjectCard />
          </div>
        </main>
        <aside className="flex w-4 flex-col items-center bg-[#f1f1f1]">
          <svg width="16" height="17"><path d="m4.500 11 4-4.500 4 4.500Z" fill="#a3a3a3" /></svg>
          <div className="ml-px h-[504px] w-[13px] bg-[#c1c1c1]" />
          <svg width="16" height="17" className="mt-auto mb-px"><path d="m4.500 6 4 4.500L12.500 6Z" fill="#505050" /></svg>
        </aside>
      </div>
      <footer className="h-px shrink-0 bg-[#222]" />
    </div>
  );
}
